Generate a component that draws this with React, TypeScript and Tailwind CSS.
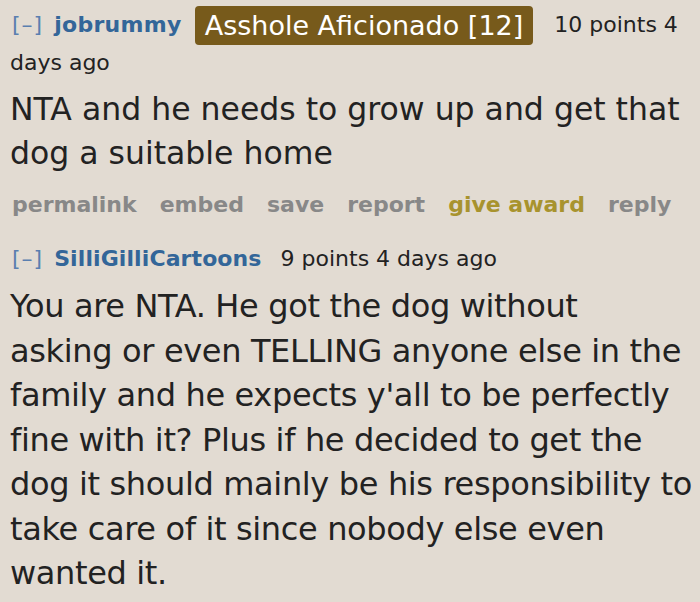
export default function App() {
  return (
    <div className="w-[700px] h-[602px] overflow-hidden bg-[#e2dbd2] text-[#222] pl-[10px] pt-[6px] font-['DejaVu_Sans',Verdana,sans-serif]">
      {/* first comment */}
      <div className="pr-[10px]">
        <p className="text-[22px] leading-[36px]">
          <span className="text-[#5a7fb0] ml-[2px] mr-[11px] tracking-[1px]">[–]</span>
          <span className="font-bold text-[#336699] tracking-[0.3px]">jobrummy</span>
          <span className="inline-block align-middle ml-[13px] mr-[21px] rounded-[4px] bg-[#775a1b] px-[10px] text-[27px] leading-[39px] text-white">
            Asshole Aficionado [12]
          </span>
          10 points 4 days ago
        </p>
        <div className="mt-[6px] text-[31.5px] leading-[44px]">
          NTA and he needs to grow up and get that dog a suitable home
        </div>
        <ul className="mt-[12px] flex gap-[23px] text-[22px] font-bold text-[#888] leading-[36px] pl-[2px]">
          <li>permalink</li>
          <li>embed</li>
          <li>save</li>
          <li>report</li>
          <li className="text-[#a8932e]">give award</li>
          <li>reply</li>
        </ul>
      </div>

      {/* second comment */}
      <div className="mt-[18px]">
        <p className="text-[22px] leading-[36px]">
          <span className="text-[#5a7fb0] ml-[2px] mr-[11px] tracking-[1px]">[–]</span>
          <span className="font-bold text-[#336699] tracking-[0.1px] mr-[19px]">SilliGilliCartoons</span>
          9 points 4 days ago
        </p>
        <div className="mt-[7px] text-[32px] leading-[44.5px] tracking-[-0.35px] whitespace-nowrap">
          You are NTA. He got the dog without
          <br />
          asking or even TELLING anyone else in the
          <br />
          family and he expects y'all to be perfectly
          <br />
          fine with it? Plus if he decided to get the
          <br />
          dog it should mainly be his responsibility to
          <br />
          take care of it since nobody else even
          <br />
          wanted it.
        </div>
      </div>
    </div>
  );
}
